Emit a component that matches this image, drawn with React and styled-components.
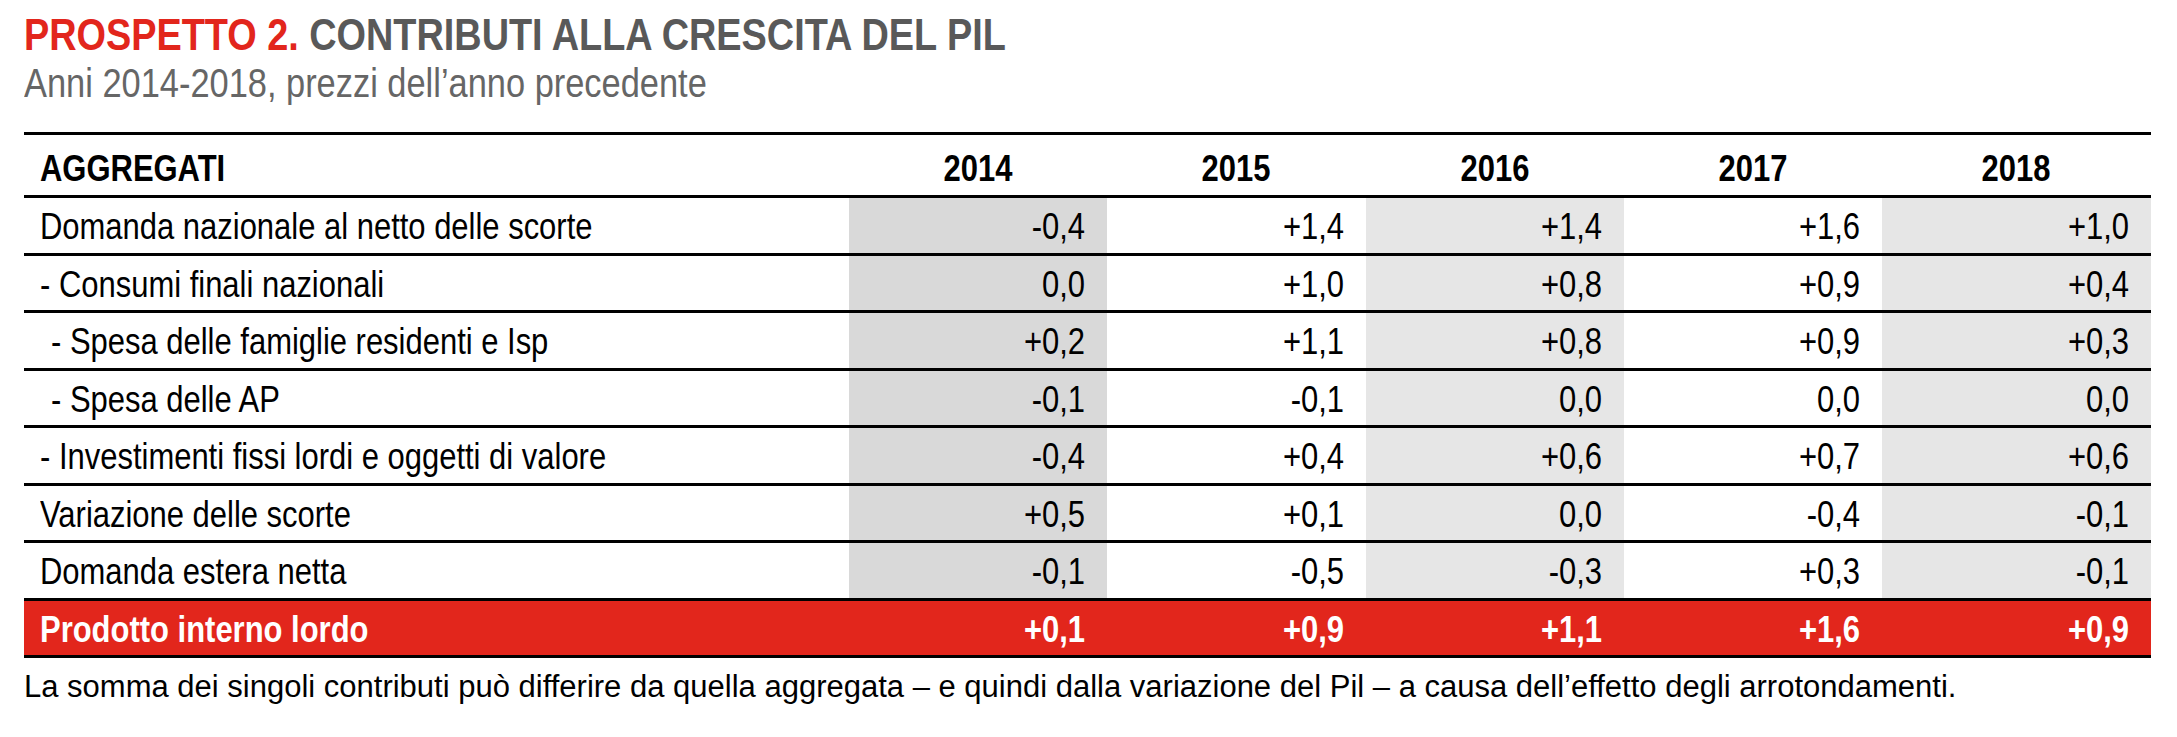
import React from "react";
import styled, { createGlobalStyle } from "styled-components";

const Global = createGlobalStyle`
  html, body { margin: 0; padding: 0; background: #ffffff; }
  body { font-family: "Liberation Sans", Arial, sans-serif; }
`;

const Page = styled.div`
  padding: 13px 26px 0 24px;
  width: 2127px;
`;

/* Arial Narrow-like condensed text: regular face squeezed horizontally */
const Narrow = styled.span`
  display: inline-block;
  white-space: nowrap;
  transform: scaleX(0.86);
  transform-origin: ${(p) => p.$origin || "left"} center;
`;

const Title = styled.h1`
  margin: 0;
  font-size: 44px;
  line-height: 44px;
  font-weight: 700;
  color: #595959;
  white-space: nowrap;
`;

const Red = styled.span`
  color: #e2261c;
`;

const Subtitle = styled.div`
  margin-top: 6px;
  font-size: 40px;
  line-height: 40px;
  color: #666666;
`;

const Table = styled.div`
  margin-top: 29px;
  display: grid;
  grid-template-columns: 825px 258px 259px 258px 258px 269px;
  border-top: 3px solid #000;
`;

const Row = styled.div`
  display: contents;
`;

const Cell = styled.div`
  box-sizing: border-box;
  height: ${(p) => (p.$head ? "63px" : "57.5px")};
  border-bottom: 3px solid #000;
  display: flex;
  align-items: center;
  font-size: 36px;
  white-space: nowrap;
  color: ${(p) => (p.$total ? "#ffffff" : "#000000")};
  font-weight: ${(p) => (p.$bold ? 700 : 400)};
  background: ${(p) => p.$bg || "transparent"};
  padding-top: ${(p) => (p.$head ? "8px" : "4px")};
`;

const Label = styled(Cell)`
  padding-left: ${(p) => (p.$indent ? "27px" : "16px")};
`;

const Num = styled(Cell)`
  justify-content: flex-end;
  padding-right: 22px;
`;

const Year = styled(Cell)`
  justify-content: center;
`;

const Note = styled.p`
  margin: 12px 0 0 0;
  font-size: 31px;
  line-height: 34px;
  color: #000;
  white-space: nowrap;
`;

const years = ["2014", "2015", "2016", "2017", "2018"];
const colBg = ["#d9d9d9", null, "#e6e6e6", null, "#e6e6e6"];
const RED = "#e2261c";

const rows = [
  { label: "Domanda nazionale al netto delle scorte", v: ["-0,4", "+1,4", "+1,4", "+1,6", "+1,0"] },
  { label: "- Consumi finali nazionali", v: ["0,0", "+1,0", "+0,8", "+0,9", "+0,4"] },
  { label: "- Spesa delle famiglie residenti e Isp", indent: true, v: ["+0,2", "+1,1", "+0,8", "+0,9", "+0,3"] },
  { label: "- Spesa delle AP", indent: true, v: ["-0,1", "-0,1", "0,0", "0,0", "0,0"] },
  { label: "- Investimenti fissi lordi e oggetti di valore", v: ["-0,4", "+0,4", "+0,6", "+0,7", "+0,6"] },
  { label: "Variazione delle scorte", v: ["+0,5", "+0,1", "0,0", "-0,4", "-0,1"] },
  { label: "Domanda estera netta", v: ["-0,1", "-0,5", "-0,3", "+0,3", "-0,1"] },
];

const total = { label: "Prodotto interno lordo", v: ["+0,1", "+0,9", "+1,1", "+1,6", "+0,9"] };

export default function App() {
  return (
    <>
      <Global />
      <Page>
        <Title>
          <Narrow>
            <Red>PROSPETTO 2.</Red> CONTRIBUTI ALLA CRESCITA DEL PIL
          </Narrow>
        </Title>
        <Subtitle>
          <Narrow>Anni 2014-2018, prezzi dell’anno precedente</Narrow>
        </Subtitle>
        <Table>
          <Row>
            <Label $head $bold><Narrow>AGGREGATI</Narrow></Label>
            {years.map((y) => (
              <Year key={y} $head $bold><Narrow $origin="center">{y}</Narrow></Year>
            ))}
          </Row>
          {rows.map((r) => (
            <Row key={r.label}>
              <Label $indent={r.indent}><Narrow>{r.label}</Narrow></Label>
              {r.v.map((x, i) => (
                <Num key={i} $bg={colBg[i]}><Narrow $origin="right">{x}</Narrow></Num>
              ))}
            </Row>
          ))}
          <Row>
            <Label $bold $total $bg={RED}><Narrow>{total.label}</Narrow></Label>
            {total.v.map((x, i) => (
              <Num key={i} $bold $total $bg={RED}><Narrow $origin="right">{x}</Narrow></Num>
            ))}
          </Row>
        </Table>
        <Note>
          La somma dei singoli contributi può differire da quella aggregata – e quindi dalla variazione del Pil – a causa dell’effetto degli arrotondamenti.
        </Note>
      </Page>
    </>
  );
}
